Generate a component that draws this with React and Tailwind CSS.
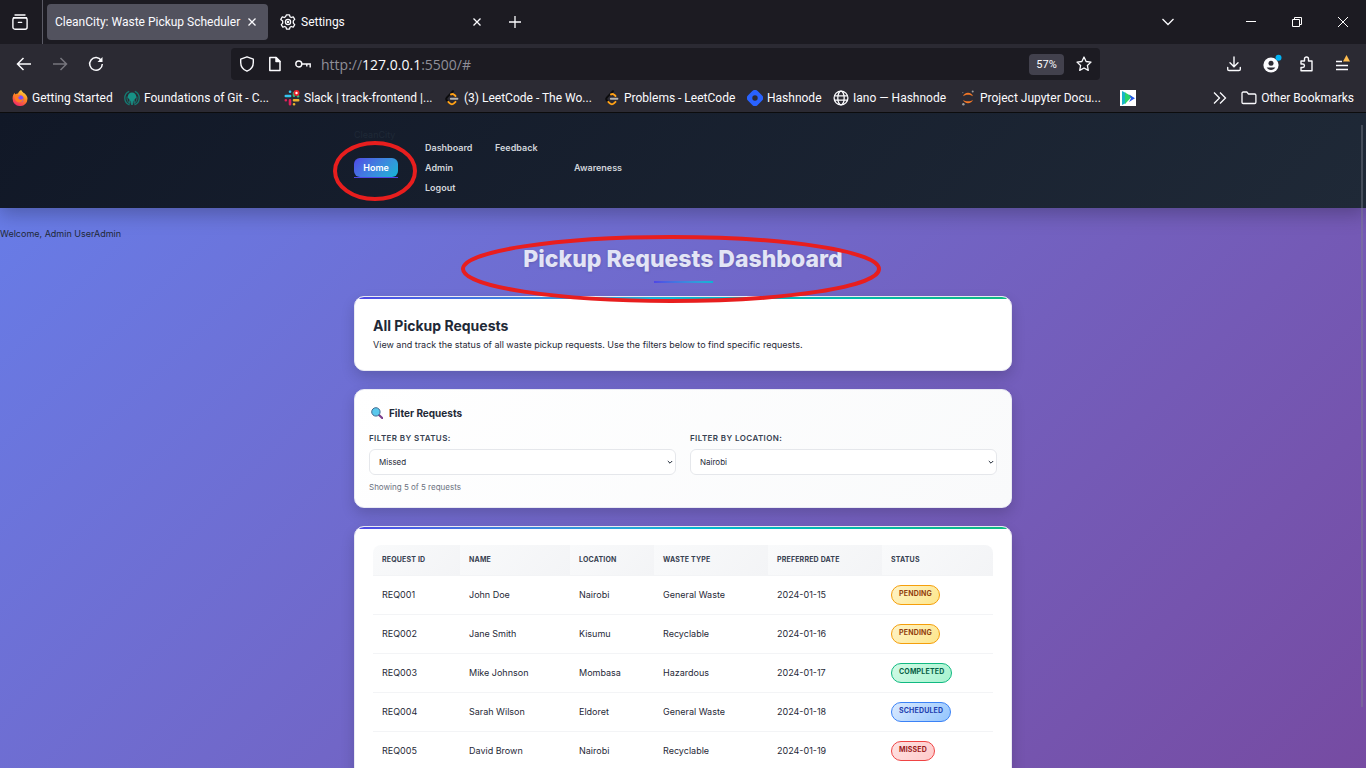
import React from "react";

const FONT_UI = "font-[Roboto,'Open_Sans',sans-serif]";

function ArchiveIcon() {
  return (
    <svg width="16" height="16" viewBox="0 0 16 16" fill="none" stroke="#fbfbfe" strokeWidth="1.4" strokeLinecap="round">
      <path d="M3 1h10" />
      <path d="M1.5 3.8h13" />
      <rect x="0.9" y="3.8" width="14.2" height="11.4" rx="2" />
      <path d="M6.4 8.4h3.2" />
    </svg>
  );
}

function GearIcon() {
  return (
    <svg width="16" height="16" viewBox="0 0 16 16" fill="none" stroke="#fbfbfe" strokeWidth="1.3" strokeLinejoin="round">
      <path d="M6.5 0.8h3l.5 2 1.2.7 2-.7 1.5 2.6-1.4 1.5v2.2l1.4 1.5-1.5 2.6-2-.7-1.2.7-.5 2h-3l-.5-2-1.2-.7-2 .7-1.5-2.6 1.4-1.5V6.900L.8 5.400l1.500-2.600 2 .7L5.500 2.800z" />
      <circle cx="8" cy="8" r="2.6" />
      <circle cx="8" cy="8" r="0.6" />
    </svg>
  );
}

function CloseIcon() {
  return (
    <svg width="8" height="8" viewBox="0 0 8 8" stroke="#fbfbfe" strokeWidth="1.3">
      <path d="M.5.5l7 7M7.500.5l-7 7" />
    </svg>
  );
}

function FirefoxIcon() {
  return (
    <svg width="16" height="16" viewBox="0 0 16 16" className="shrink-0">
      <defs>
        <linearGradient id="fx" x1="0.8" y1="0" x2="0.3" y2="1">
          <stop offset="0" stopColor="#ffe14a" />
          <stop offset="0.45" stopColor="#ff8a1f" />
          <stop offset="1" stopColor="#f0246a" />
        </linearGradient>
      </defs>
      <path d="M9.300 0c.4 1.600 1.700 2.300 2.700 3.300.3-.2.500-.1.700.2C14.400 5 15.500 6.800 15.500 8.800A7.400 7.200 0 0 1 .6 8.800C.5 6.500 1.300 4.300 2.600 2.700l.5 1.800C4.200 3.700 5.300 3.500 6 3.600 6.400 2 7.700.6 9.300 0z" fill="url(#fx)" />
      <circle cx="8" cy="8.800" r="3.500" fill="#7a4cff" />
      <path d="M2.500 5c1.500-.8 3-.6 4 .3l2 .3c-.3 1-1.500 1-2 1.300-.6.500 0 2 1.400 2.600 1.700.5 3-.2 3.600-1.700 0 3-2 4.800-4.300 4.600C4.300 12.200 2.200 9.500 2.500 5z" fill="#ff7a22" />
    </svg>
  );
}

function GitKrakenIcon() {
  return (
    <svg width="16" height="16" viewBox="0 0 16 16" className="shrink-0">
      <path d="M5.200 1.400A7.200 7.200 0 0 0 5.500 14.800M10.800 1.400a7.200 7.200 0 0 1-.3 13.400" fill="none" stroke="#147a72" strokeWidth="1.300" />
      <path d="M3.200 6.500c-.6 3 .4 5.300 2.500 7M12.800 6.500c.6 3-.4 5.300-2.500 7" fill="none" stroke="#147a72" strokeWidth="1" />
      <path d="M8 2.500c2.500 0 4.200 1.800 4.200 4.200 0 1.400-1.200 2-1.700 3l.2 3.800-1-.1-.3-2.600h-.4L8.700 15H7.300L7 10.800h-.4l-.3 2.600-1 .1.200-3.800c-.5-1-1.700-1.600-1.700-3C3.800 4.300 5.500 2.500 8 2.500z" fill="#179287" />
    </svg>
  );
}

function SlackIcon() {
  return (
    <svg width="16" height="16" viewBox="0 0 16 16" strokeWidth="2.600" strokeLinecap="round" className="shrink-0">
      <path d="M6 1.800h.1M1.800 6h4.300" stroke="#36c5f0" />
      <path d="M10 5.800V3M14 6.200h.1" stroke="#2eb67d" />
      <path d="M10 10.200h4.200M10 14.200h.1" stroke="#ecb22e" />
      <path d="M1.800 10.200h.1M6 10.200v4" stroke="#e01e5a" />
      <circle cx="12.500" cy="3" r="3" fill="#e8232a" />
      <circle cx="12.500" cy="3" r="1.200" fill="#fff" />
    </svg>
  );
}

function LeetCodeIcon() {
  return (
    <svg width="16" height="16" viewBox="0 0 16 16" fill="none" strokeWidth="1.900" strokeLinecap="round" strokeLinejoin="round" className="shrink-0">
      <path d="M9 1.200L3 7.300c-1 1-1 2.200 0 3.200l1.300 1.300" stroke="#0b0b0d" />
      <path d="M7 4.400c1.200-.8 2.200-.6 3.200.4l1.300 1.200" stroke="#ffa116" />
      <path d="M4.300 11.800l1.600 1.600c1.100 1.100 2.900 1.100 4 0l1.600-1.600" stroke="#ffa116" />
      <path d="M6.800 8.800h6.600" stroke="#b3b3b3" />
    </svg>
  );
}

function HashnodeIcon() {
  return (
    <svg width="16" height="16" viewBox="0 0 16 16" className="shrink-0">
      <path fillRule="evenodd" fill="#2962ff" d="M1.100 5.300a3.800 3.800 0 0 0 0 5.400l4.200 4.200a3.800 3.800 0 0 0 5.400 0l4.200-4.200a3.800 3.800 0 0 0 0-5.400L10.700 1.100a3.800 3.800 0 0 0-5.400 0zM8 10.700a2.700 2.700 0 1 0 0-5.400 2.700 2.700 0 0 0 0 5.400z" />
    </svg>
  );
}

function GlobeIcon() {
  return (
    <svg width="16" height="16" viewBox="0 0 16 16" fill="none" stroke="#fbfbfe" strokeWidth="1.300" className="shrink-0">
      <circle cx="8" cy="8" r="6.900" />
      <ellipse cx="8" cy="8" rx="3.200" ry="6.900" />
      <path d="M1.500 5.800h13M1.500 10.200h13" />
    </svg>
  );
}

function JupyterIcon() {
  return (
    <svg width="16" height="16" viewBox="0 0 16 16" className="shrink-0">
      <path d="M3 6.300C3.800 4 5.700 2.800 8 2.800s4.200 1.200 5 3.500C11.800 5.200 10 4.700 8 4.700S4.200 5.200 3 6.300z" fill="#f37726" />
      <path d="M3 9.700c.8 2.300 2.700 3.500 5 3.500s4.200-1.200 5-3.500c-1.200 1.100-3 1.600-5 1.600s-3.800-.5-5-1.600z" fill="#f37726" />
      <circle cx="12.700" cy="1.600" r="1" fill="#9e9e9e" />
      <circle cx="3.400" cy="14.300" r="1.200" fill="#9e9e9e" />
      <circle cx="2.800" cy="2.600" r="0.700" fill="#757575" />
    </svg>
  );
}

function PlayIcon() {
  return (
    <svg width="16" height="16" viewBox="0 0 16 16">
      <rect width="16" height="16" fill="#fff" />
      <path d="M2 1l4 2v10l-4 2z" fill="#19b5c9" />
      <path d="M5 2.500l7 4L5 14z" fill="#2bd46a" />
      <path d="M9 4.500l6 3.700-6 3.700 2-3.700z" fill="#2456e8" />
    </svg>
  );
}

const bookmarks = [
  { label: "Getting Started", Icon: FirefoxIcon, width: "w-[112px]" },
  { label: "Foundations of Git - C...", Icon: GitKrakenIcon, width: "w-[160px]" },
  { label: "Slack | track-frontend |...", Icon: SlackIcon, width: "w-[160px]" },
  { label: "(3) LeetCode - The Wo...", Icon: LeetCodeIcon, width: "w-[160px]" },
  { label: "Problems - LeetCode", Icon: LeetCodeIcon, width: "w-[143px]" },
  { label: "Hashnode", Icon: HashnodeIcon, width: "w-[86px]" },
  { label: "Iano — Hashnode", Icon: GlobeIcon, width: "w-[127px]" },
  { label: "Project Jupyter Docu...", Icon: JupyterIcon, width: "w-[160px]" },
];

function TabStrip() {
  return (
    <div className="flex h-11 items-center bg-[#1c1b22]">
      <button aria-label="Recent tabs" className="flex h-11 w-[43px] items-center justify-center border-r border-[#5b5b66] pr-0.5">
        <ArchiveIcon />
      </button>
      <div className="ml-1 flex h-9 w-[221px] items-center justify-between rounded bg-[#52525e] pl-2 pr-3">
        <span className="whitespace-nowrap">CleanCity: Waste Pickup Scheduler</span>
        <button aria-label="Close CleanCity tab"><CloseIcon /></button>
      </div>
      <div className="ml-1 flex h-9 w-[221px] items-center gap-[5px] pl-2 pr-3">
        <GearIcon />
        <span className="flex-1">Settings</span>
        <button aria-label="Close Settings tab"><CloseIcon /></button>
      </div>
      <button aria-label="New tab" className="ml-4">
        <svg width="12" height="12" viewBox="0 0 12 12" stroke="#fbfbfe" strokeWidth="1.300"><path d="M6 0v12M0 6h12" /></svg>
      </button>
      <div className="ml-auto flex items-center">
        <button aria-label="List all tabs" className="mr-[72px]">
          <svg width="12" height="8" viewBox="0 0 12 8" fill="none" stroke="#fbfbfe" strokeWidth="1.300"><path d="M.5 1L6 6.500 11.500 1" /></svg>
        </button>
        <button aria-label="Minimize" className="mr-9">
          <svg width="10" height="10" viewBox="0 0 10 10" stroke="#fff"><path d="M0 4.500h10" /></svg>
        </button>
        <button aria-label="Restore" className="mr-9">
          <svg width="10" height="10" viewBox="0 0 10 10" fill="none" stroke="#fff"><path d="M.5 2.500h7v7h-7zM2.500 2.500v-2h7v7h-2" /></svg>
        </button>
        <button aria-label="Close window" className="mr-[18px]">
          <svg width="10" height="10" viewBox="0 0 10 10" stroke="#fff"><path d="M0 0l10 10M10 0L0 10" /></svg>
        </button>
      </div>
    </div>
  );
}

function Toolbar() {
  return (
    <div className="flex h-10 items-center">
      <div className="flex w-[231px] shrink-0 items-center gap-5 pl-4">
        <button aria-label="Back">
          <svg width="16" height="16" viewBox="0 0 16 16" fill="none" stroke="#fbfbfe" strokeWidth="1.500"><path d="M15 8H1.500M7.500 2L1.500 8l6 6" /></svg>
        </button>
        <button aria-label="Forward" disabled>
          <svg width="16" height="16" viewBox="0 0 16 16" fill="none" stroke="#77767e" strokeWidth="1.500"><path d="M1 8h13.500M8.500 2l6 6-6 6" /></svg>
        </button>
        <button aria-label="Reload">
          <svg width="16" height="16" viewBox="0 0 16 16" fill="none" stroke="#fbfbfe" strokeWidth="1.500"><path d="M13.300 4.500A6.300 6.300 0 1 0 14.300 8" /><path d="M14.500 1v5h-5z" fill="#fbfbfe" stroke="none" /></svg>
        </button>
      </div>
      <div className="flex h-8 w-[869px] min-w-0 items-center rounded bg-[#1c1b22] pl-2 pr-2">
        <svg width="16" height="16" viewBox="0 0 16 16" fill="none" stroke="#fbfbfe" strokeWidth="1.400" strokeLinejoin="round" className="shrink-0"><path d="M8 .8l6.300 2.400v3.300c0 4-2.300 7.200-6.300 8.700C4 13.700 1.700 10.500 1.700 6.500V3.200z" /></svg>
        <svg width="16" height="16" viewBox="0 0 16 16" fill="none" stroke="#fbfbfe" strokeWidth="1.500" strokeLinejoin="round" className="ml-3 shrink-0"><path d="M3.500 1.500h5.500l4 4v9H2.800v-13z" /><path d="M9 1.500v4h4z" fill="#fbfbfe" /></svg>
        <svg width="16" height="16" viewBox="0 0 16 16" fill="none" stroke="#fbfbfe" strokeWidth="1.400" className="ml-3 shrink-0"><circle cx="3.800" cy="8" r="3" /><path d="M6.800 8h8.400v3.400M11.800 8v2.600" /></svg>
        <div className="relative ml-[10px] min-w-0 flex-1 text-[14px] font-['Open_Sans','Noto_Sans',sans-serif]">
          <span aria-hidden="true" className="whitespace-nowrap text-[#8f8f98]">
            http://<span className="text-[#fbfbfe]">127.0.0.1</span>:5500/#
          </span>
          <input
            aria-label="Address"
            className="absolute inset-0 w-full bg-transparent text-transparent caret-white outline-none"
            defaultValue="http://127.0.0.1:5500/#"
          />
        </div>
        <button className="mr-3 h-[21px] w-[35px] shrink-0 rounded bg-[#42414d] text-[11px] leading-[22px]">57%</button>
        <button aria-label="Bookmark this page" className="shrink-0">
          <svg width="16" height="16" viewBox="0 0 16 16" fill="none" stroke="#fbfbfe" strokeWidth="1.300" strokeLinejoin="round"><path d="M8 1l2.100 4.500 4.900.6-3.600 3.400.9 4.900L8 12l-4.300 2.400.9-4.900L1 6.100l4.900-.6z" /></svg>
        </button>
      </div>
      <div className="ml-auto flex shrink-0 items-center gap-5 pr-4">
        <button aria-label="Downloads">
          <svg width="16" height="16" viewBox="0 0 16 16" fill="none" stroke="#fbfbfe" strokeWidth="1.400" strokeLinecap="round"><path d="M8 1v9.500M4 6.800l4 3.900 4-3.900M1.700 11.500v1.700c0 .8.600 1.300 1.400 1.300h9.800c.8 0 1.400-.5 1.400-1.300v-1.700" /></svg>
        </button>
        <button aria-label="Account">
          <svg width="20" height="20" viewBox="0 0 20 20"><circle cx="9" cy="11" r="7.600" fill="#fbfbfe" /><circle cx="9" cy="9.300" r="2.500" fill="#2b2a33" /><path d="M4.700 13.600h8.600c-.9 1.600-2.400 2.500-4.300 2.500s-3.400-.9-4.300-2.500z" fill="#2b2a33" /><circle cx="16.500" cy="3.700" r="3" fill="#00b3f4" /></svg>
        </button>
        <button aria-label="Extensions" className="-ml-1">
          <svg width="16" height="16" viewBox="0 0 16 16" fill="none" stroke="#fbfbfe" strokeWidth="1.400" strokeLinejoin="round"><path d="M3 5h3.500V3a2 2 0 0 1 4 0v2H14v9.800H3v-3.300h1.700a1.700 1.700 0 0 0 0-3.500H3z" /></svg>
        </button>
        <button aria-label="Application menu">
          <svg width="16" height="18" viewBox="0 0 16 18" stroke="#fbfbfe" strokeWidth="1.400"><path d="M2 6.500h6M2 10.500h12M2 14.500h12" /><path d="M12.500 0l3.500 6.500H9z" fill="#ffbd4f" stroke="none" /></svg>
        </button>
      </div>
    </div>
  );
}

function BookmarksBar() {
  return (
    <nav aria-label="Bookmarks" className="flex h-[29px] items-center border-b border-[#0c0c0d] pl-3 pr-3">
      <div className="flex min-w-0 flex-1 items-center">
        {bookmarks.map(({ label, Icon, width }) => (
          <a key={label} href="#" className={`flex h-6 shrink-0 items-center gap-1 ${width}`}>
            <Icon />
            <span className="whitespace-nowrap">{label}</span>
          </a>
        ))}
        <a href="#" aria-label="Play"><PlayIcon /></a>
      </div>
      <button aria-label="More bookmarks" className="mr-[14px]">
        <svg width="14" height="12" viewBox="0 0 14 12" fill="none" stroke="#fbfbfe" strokeWidth="1.300"><path d="M1 .5L6.500 6 1 11.500M7 .5L12.500 6 7 11.500" /></svg>
      </button>
      <a href="#" className="flex items-center gap-1">
        <svg width="16" height="16" viewBox="0 0 16 16" fill="none" stroke="#fbfbfe" strokeWidth="1.300" strokeLinejoin="round"><path d="M1 12.300V3.200c0-.7.500-1.200 1.200-1.200h3.600l1.700 2h6.100c.8 0 1.300.5 1.300 1.200v7.100c0 .8-.5 1.200-1.300 1.200H2.200c-.7 0-1.200-.4-1.200-1.200z" /></svg>
        <span className="whitespace-nowrap">Other Bookmarks</span>
      </a>
    </nav>
  );
}

function SiteHeader() {
  return (
    <header className="relative z-10 bg-linear-135 from-[#111827] to-[#1f2937] pb-[10px] pt-[14px] shadow-[0_6px_18px_rgba(0,0,0,0.25)]">
      <nav aria-label="Main" className="mx-auto flex max-w-[658px] items-start text-[9px] font-semibold text-[#d1d5db]">
        <div className="flex w-[71px] flex-col items-start">
          <span className="h-4 font-normal leading-4 text-[#1f2937]">CleanCity</span>
          <a href="#" className="mt-[15px] block w-11 border-b border-[#4f46e5]">
            <span className="flex h-[19px] items-center justify-center rounded-md bg-linear-135 from-[#4f46e5] to-[#06b6d4] text-white">Home</span>
          </a>
        </div>
        <div className="mt-[11px] flex w-[70px] flex-col leading-5">
          <a href="#">Dashboard</a>
          <a href="#">Admin</a>
          <a href="#">Logout</a>
        </div>
        <a href="#" className="mt-[11px] w-[79px] leading-5">Feedback</a>
        <a href="#" className="mt-[31px] leading-5">Awareness</a>
      </nav>
    </header>
  );
}

function AccentBar() {
  return <div className="h-0.5 bg-linear-to-r from-[#4f46e5] via-[#06b6d4] to-[#10b981]" />;
}

function FilterSelect({ id, label, value, options }) {
  return (
    <div className="flex min-w-0 flex-1 flex-col">
      <label htmlFor={id} className="text-[8px] font-semibold uppercase leading-3 tracking-wider text-[#374151]">{label}</label>
      <div className="relative mt-[5px]">
        <select id={id} defaultValue={value} className="block h-[26px] w-full appearance-none rounded-md border border-[#e5e7eb] bg-white pl-[9px] text-[8px] text-[#1f2937]">
          {options.map((o) => <option key={o}>{o}</option>)}
        </select>
        <svg className="pointer-events-none absolute right-[3px] top-[11px]" width="6" height="5" viewBox="0 0 6 5" fill="none" stroke="#1f2937" strokeWidth="1"><path d="M.8 1L3 3.200 5.200 1" /></svg>
      </div>
    </div>
  );
}

const badgeStyles = {
  Pending: "border-[#f59e0b] from-[#fef3c7] to-[#fde68a] text-[#92400e]",
  Completed: "border-[#10b981] from-[#d1fae5] to-[#a7f3d0] text-[#065f46]",
  Scheduled: "border-[#3b82f6] from-[#dbeafe] to-[#93c5fd] text-[#1e40af]",
  Missed: "border-[#ef4444] from-[#fee2e2] to-[#fecaca] text-[#991b1b]",
};

const columns = [
  { title: "Request ID", width: "w-[87px]" },
  { title: "Name", width: "w-[110px]" },
  { title: "Location", width: "w-[84px]" },
  { title: "Waste Type", width: "w-[114px]" },
  { title: "Preferred Date", width: "w-[114px]" },
  { title: "Status", width: "w-[111px]" },
];

const requests = [
  ["REQ001", "John Doe", "Nairobi", "General Waste", "2024-01-15", "Pending"],
  ["REQ002", "Jane Smith", "Kisumu", "Recyclable", "2024-01-16", "Pending"],
  ["REQ003", "Mike Johnson", "Mombasa", "Hazardous", "2024-01-17", "Completed"],
  ["REQ004", "Sarah Wilson", "Eldoret", "General Waste", "2024-01-18", "Scheduled"],
  ["REQ005", "David Brown", "Nairobi", "Recyclable", "2024-01-19", "Missed"],
];

function RequestsTable() {
  return (
    <div className="overflow-hidden rounded-lg">
      <table className="w-full table-fixed border-collapse text-left text-[9px] text-[#1f2937]">
        <thead>
          <tr className="h-[30px]">
            {columns.map((c) => (
              <th key={c.title} className={`${c.width} border-b border-[#f3f4f6] bg-linear-135 from-[#f9fafb] to-[#f3f4f6] pl-[9px] text-[7px] font-bold uppercase tracking-wide text-[#374151]`}>{c.title}</th>
            ))}
          </tr>
        </thead>
        <tbody>
          {requests.map((row) => (
            <tr key={row[0]} className="h-[39px] border-b border-[#f3f4f6]">
              {row.slice(0, 5).map((cell, i) => <td key={i} className="whitespace-nowrap pl-[9px]">{cell}</td>)}
              <td className="pl-[9px]">
                <span className={`inline-flex h-5 items-center rounded-full border bg-linear-135 px-[7px] align-middle text-[7px] font-bold uppercase tracking-wide ${badgeStyles[row[5]]}`}>{row[5]}</span>
              </td>
            </tr>
          ))}
        </tbody>
      </table>
    </div>
  );
}

const CARD = "overflow-hidden rounded-[10px] border border-[#e9eaf3] shadow-[0_6px_14px_rgba(0,0,0,0.16)]";

function Dashboard() {
  return (
    <main className="pt-[18px] text-[9px] text-[#1f2937]">
      <p className="h-[15px] leading-[15px]">Welcome, Admin UserAdmin</p>
      <div className="mx-auto flex max-w-[658px] flex-col">
        <h1 className="text-center text-[23px] font-extrabold leading-9 text-[#e2e4f5] [text-shadow:0_1px_3px_rgba(0,0,0,0.15)]">Pickup Requests Dashboard</h1>
        <div className="mx-auto mt-1 h-0.5 w-[59px] bg-linear-to-r from-[#4f46e5] to-[#06b6d4]" />
        <section className={`mt-[13px] bg-white ${CARD}`}>
          <AccentBar />
          <div className="px-[18px] pb-4 pt-[17px]">
            <h2 className="text-[14px] font-bold leading-5">All Pickup Requests</h2>
            <p className="leading-[18px]">View and track the status of all waste pickup requests. Use the filters below to find specific requests.</p>
          </div>
        </section>
        <section className={`mt-[18px] bg-linear-135 from-white to-[#f9fafb] px-[14px] pb-[13px] pt-[15px] ${CARD}`}>
          <h3 className="flex items-center gap-[6px] text-[10px] font-bold leading-4">
            <svg className="ml-[2px]" width="12" height="12" viewBox="0 0 12 12"><path d="M8 8l3.200 3" stroke="#7b3f8c" strokeWidth="2.200" strokeLinecap="round" /><circle cx="4.900" cy="4.900" r="4.200" fill="#5ac8ec" stroke="#40698f" strokeWidth="1" /></svg>
            Filter Requests
          </h3>
          <div className="mt-[11px] flex gap-[14px]">
            <FilterSelect id="status" label="Filter by Status:" value="Missed" options={["All", "Pending", "Scheduled", "Completed", "Missed"]} />
            <FilterSelect id="location" label="Filter by Location:" value="Nairobi" options={["All", "Nairobi", "Kisumu", "Mombasa", "Eldoret"]} />
          </div>
          <p className="mt-[5px] text-[8px] leading-[14px] text-[#6b7280]">Showing 5 of 5 requests</p>
        </section>
        <section className={`mt-[18px] bg-white ${CARD}`}>
          <AccentBar />
          <div className="px-[18px] pb-[18px] pt-4">
            <RequestsTable />
          </div>
        </section>
      </div>
    </main>
  );
}

function Annotations() {
  return (
    <svg className="pointer-events-none absolute left-1/2 top-0 z-20 -translate-x-1/2" width="700" height="200" viewBox="0 0 700 200" fill="none" stroke="#e81e1e" strokeWidth="4" aria-hidden="true">
      <ellipse cx="42" cy="58" rx="40" ry="28" />
      <ellipse cx="338" cy="156" rx="208" ry="32" />
    </svg>
  );
}

export default function App() {
  return (
    <div className="flex h-screen flex-col overflow-hidden">
      <div className={`shrink-0 bg-[#2b2a33] text-[12px] text-[#fbfbfe] ${FONT_UI}`}>
        <TabStrip />
        <Toolbar />
        <BookmarksBar />
      </div>
      <div className="relative min-h-0 flex-1 overflow-hidden bg-linear-135 from-[#667eea] to-[#764ba2] font-[Inter,sans-serif]">
        <SiteHeader />
        <Dashboard />
        <Annotations />
        <div className="absolute bottom-[61px] right-[3px] top-3 z-20 w-0.5 bg-[#7f8590]/40" />
      </div>
    </div>
  );
}
